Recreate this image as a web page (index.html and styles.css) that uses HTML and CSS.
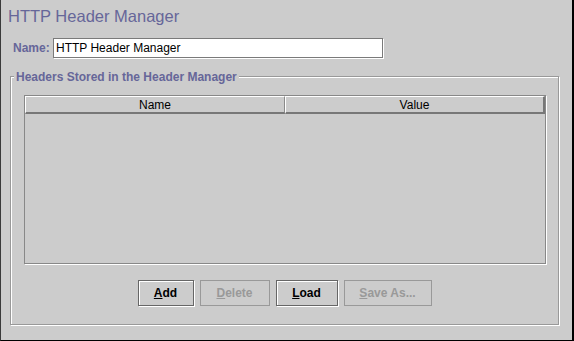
FILE: index.html
```html
<!DOCTYPE html>
<html>
<head>
<meta charset="utf-8">
<link rel="stylesheet" href="styles.css">
</head>
<body>
<div class="frame">
  <div class="title">HTTP Header Manager</div>
  <div class="name-row">
    <span class="name-label">Name:</span>
    <div class="field">HTTP Header Manager</div>
  </div>
  <div class="group">
    <span class="legend">Headers Stored in the Header Manager</span>
    <div class="table">
      <div class="thead">
        <div class="th th-name">Name</div>
        <div class="th th-value">Value</div>
      </div>
      <div class="tbody"></div>
    </div>
    <div class="buttons">
      <div class="btn w-add"><u>A</u>dd</div>
      <div class="btn disabled w-del"><u>D</u>elete</div>
      <div class="btn w-load"><u>L</u>oad</div>
      <div class="btn disabled w-save"><u>S</u>ave As...</div>
    </div>
  </div>
</div>
</body>
</html>
```
FILE: styles.css
```css
html, body {
  margin: 0;
  padding: 0;
  background: #cccccc;
}
.frame {
  width: 574px;
  height: 341px;
  box-sizing: border-box;
  background: #cccccc;
  border-left: 1px solid #3a3a3a;
  border-right: 2px solid #000;
  border-bottom: 1px solid #000;
  font-family: "Liberation Sans", Arial, sans-serif;
  display: flex;
  flex-direction: column;
}
.title {
  color: #666699;
  font-size: 16.5px;
  line-height: 20px;
  margin: 6px 0 0 7px;
  height: 20px;
}
.name-row {
  display: flex;
  align-items: center;
  margin: 11px 0 0 12px;
  height: 21px;
}
.name-label {
  color: #666699;
  font-weight: bold;
  font-size: 12px;
  width: 40px;
}
.field {
  width: 330px;
  height: 20px;
  box-sizing: border-box;
  border: 1px solid #7a7a7a;
  box-shadow: 1px 1px 0 #ffffff;
  background: #fff;
  font-size: 12px;
  line-height: 18px;
  padding-left: 2px;
  color: #000;
}
.group {
  position: relative;
  margin: 18px 0 0 9px;
  width: 549px;
  height: 249px;
  box-sizing: border-box;
  border: 1px solid #999999;
  box-shadow: 1px 1px 0 #ffffff, inset 1px 1px 0 #ffffff;
  padding: 18px 0 0 13px;
}
.legend {
  position: absolute;
  left: 3px;
  top: -7px;
  padding: 0 2px;
  background: #cccccc;
  color: #666699;
  font-weight: bold;
  font-size: 12px;
  line-height: 15px;
}
.table {
  width: 522px;
  height: 169px;
  box-sizing: border-box;
  border: 1px solid #888888;
  box-shadow: 1px 1px 0 #ffffff;
  display: flex;
  flex-direction: column;
}
.thead {
  display: flex;
  height: 18px;
}
.th {
  box-sizing: border-box;
  height: 18px;
  border-top: 1px solid #fff;
  border-left: 1px solid #fff;
  border-bottom: 2px solid #777777;
  border-right: 1px solid #8a8a8a;
  font-size: 12px;
  line-height: 15px;
  padding-top: 1px;
  text-align: center;
  color: #000;
}
.th-name { width: 260px; }
.th-value { width: 260px; border-right: 2px solid #777777; }
.tbody { flex: 1; }
.buttons {
  display: flex;
  justify-content: center;
  gap: 6px;
  margin-top: 16px;
  padding-right: 13px;
}
.btn {
  box-sizing: border-box;
  height: 26px;
  border: 1px solid #666666;
  box-shadow: 1px 1px 0 #ffffff, inset 1px 1px 0 #ffffff;
  font-size: 12px;
  font-weight: bold;
  color: #000;
  display: flex;
  align-items: center;
  justify-content: center;
}
.btn.disabled {
  border-color: #999999;
  box-shadow: none;
  color: #999999;
}
.w-add { width: 56px; }
.w-del { width: 70px; }
.w-load { width: 62px; }
.w-save { width: 88px; }
```
